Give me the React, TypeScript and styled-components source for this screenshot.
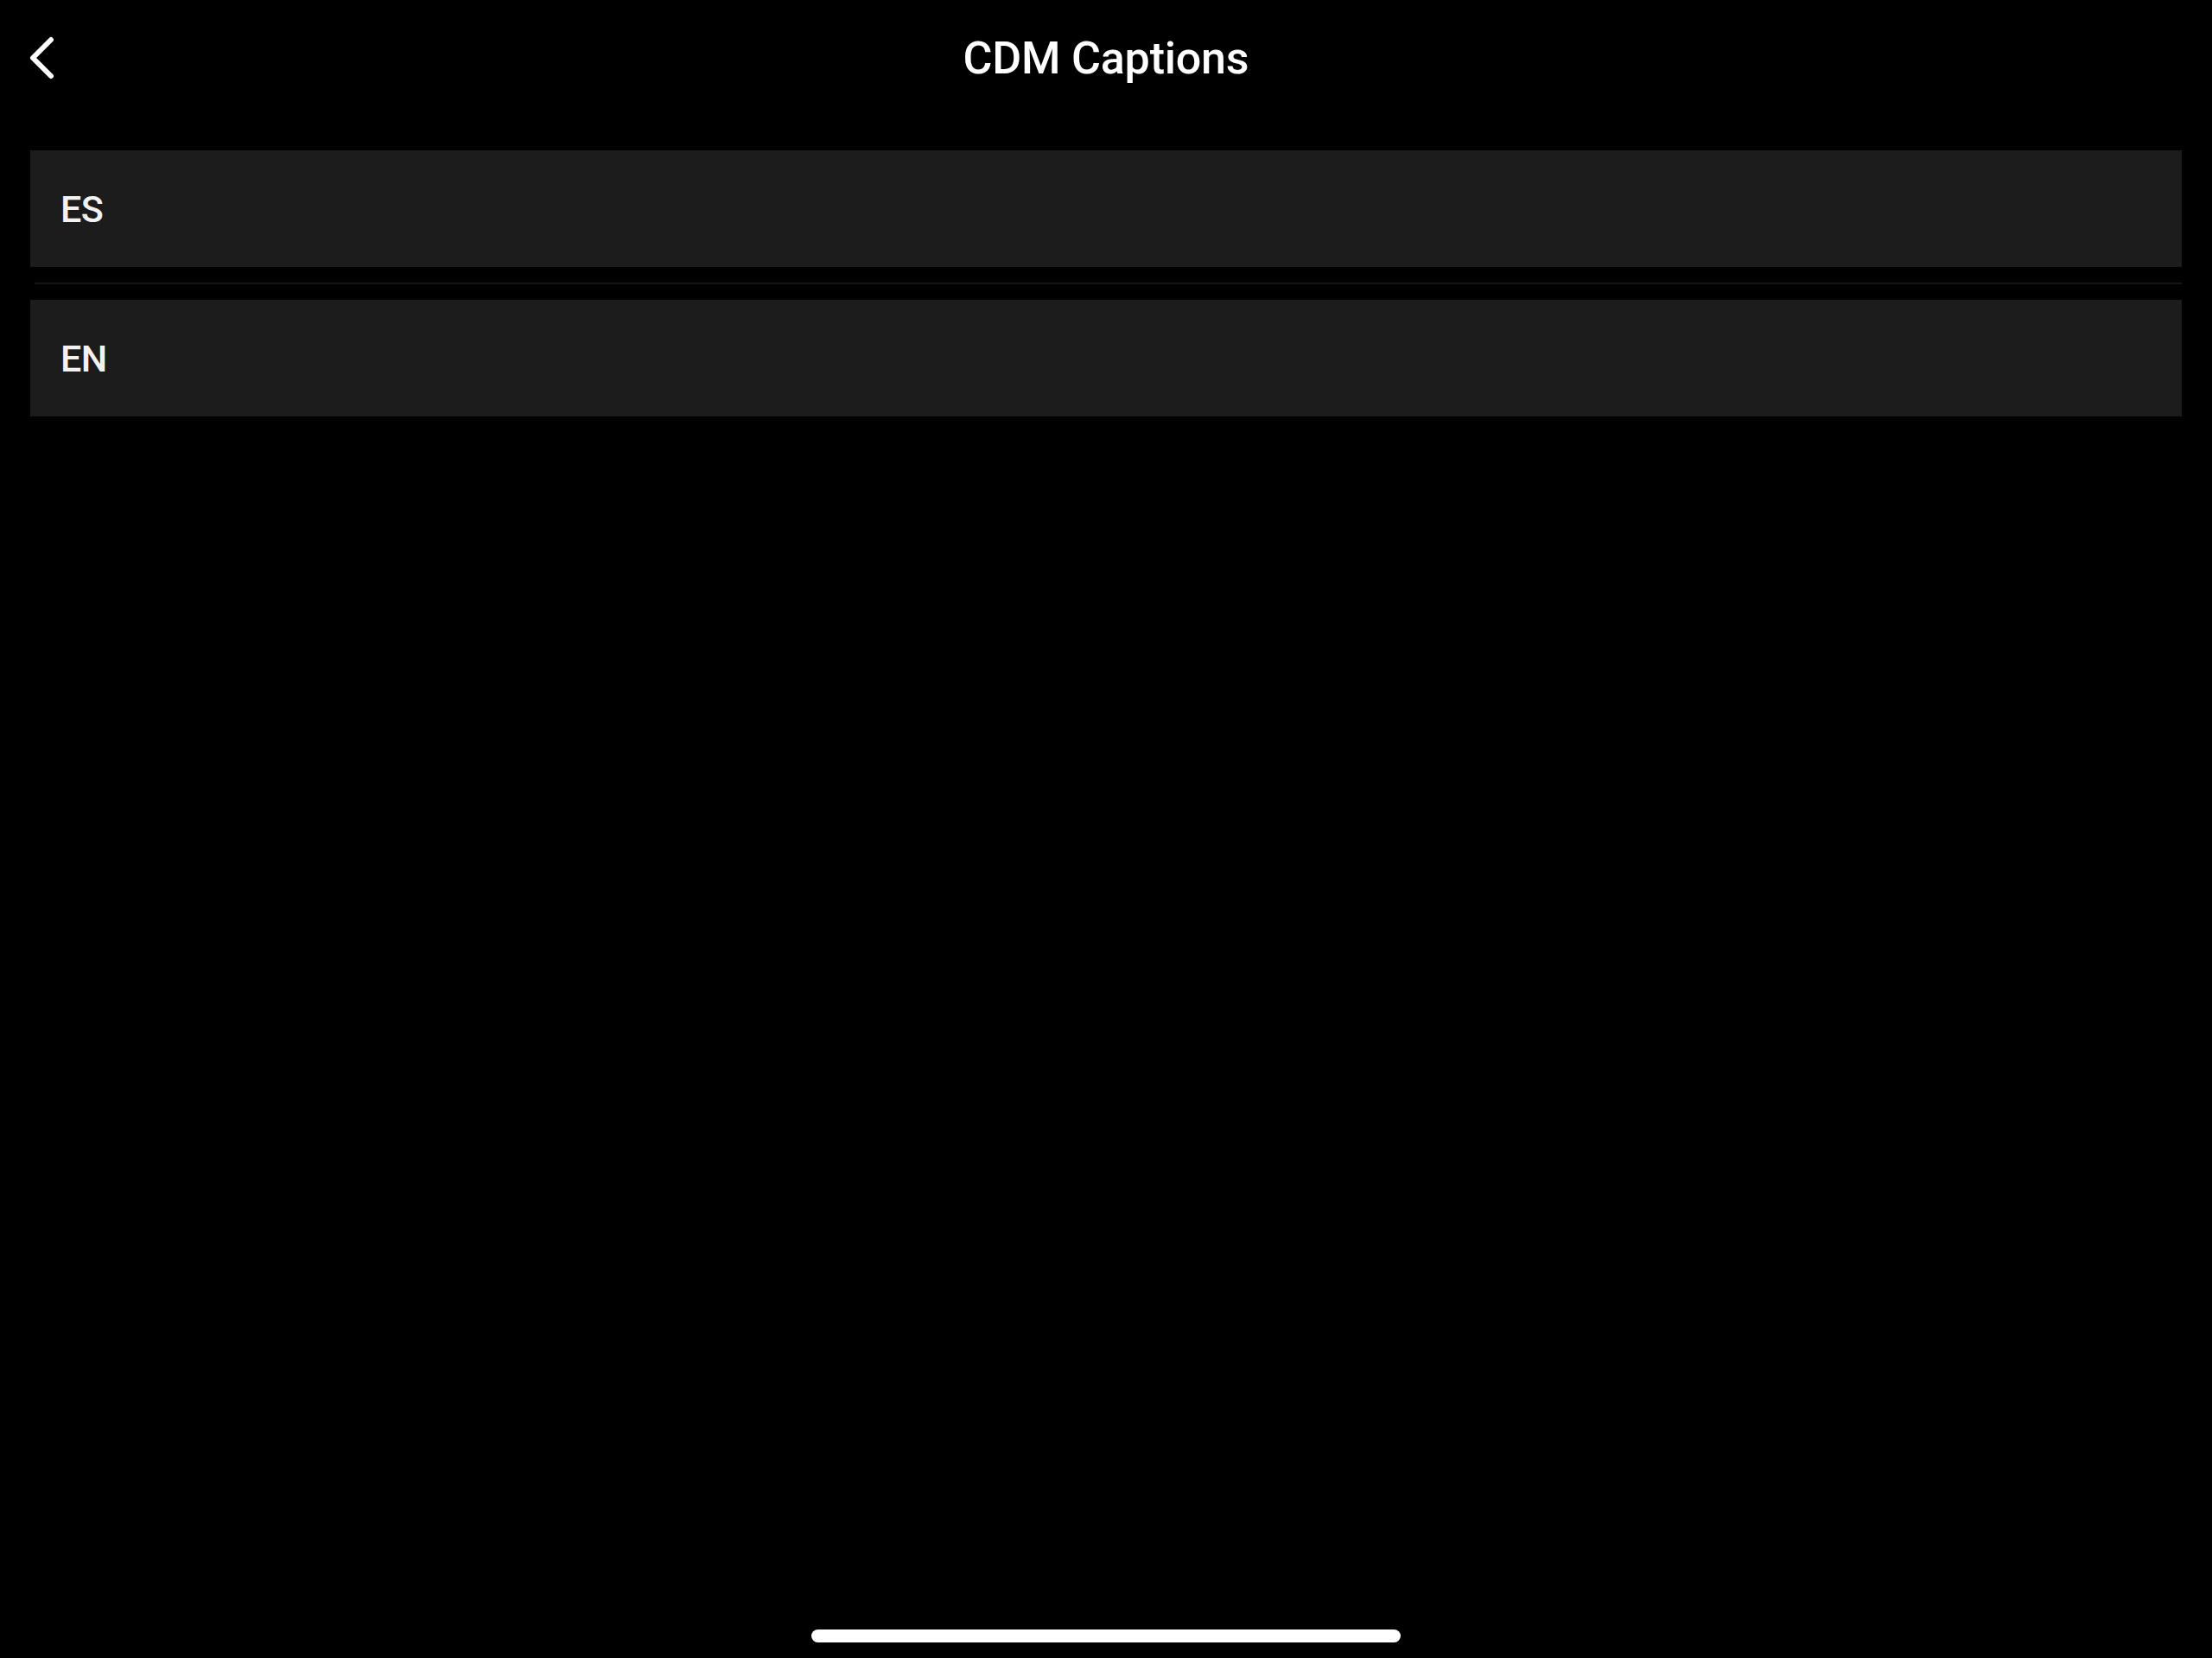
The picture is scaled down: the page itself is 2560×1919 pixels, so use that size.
import React from 'react'
import styled, {createGlobalStyle} from 'styled-components'

const GlobalStyle = createGlobalStyle`
  html, body {
    margin: 0;
    padding: 0;
    background: #000000;
  }
  body {
    font-family: Roboto, "Liberation Sans", sans-serif;
    -webkit-font-smoothing: antialiased;
  }
`

const Screen = styled.div`
  width: 2560px;
  height: 1919px;
  background: #000000;
  display: flex;
  flex-direction: column;
  box-sizing: border-box;
  overflow: hidden;
`

const Header = styled.div`
  height: 134px;
  display: grid;
  grid-template-columns: 200px 1fr 200px;
  align-items: center;
`

const BackButton = styled.button`
  width: 70px;
  height: 52px;
  padding: 0 0 0 33px;
  border: none;
  background: transparent;
  display: flex;
  align-items: center;
  justify-content: flex-start;
  cursor: pointer;
`

const Title = styled.h1`
  margin: 0;
  text-align: center;
  color: #ffffff;
  font-size: 52px;
  font-weight: 500;
  letter-spacing: -0.2px;
`

const List = styled.div`
  display: flex;
  flex-direction: column;
  padding: 40px 35px 0 35px;
`

const Row = styled.div`
  height: 135px;
  background: #1c1c1d;
  display: flex;
  align-items: center;
  box-sizing: border-box;
  padding-left: 35px;
  cursor: pointer;

  span {
    color: #f2f2f2;
    font-size: 43px;
    font-weight: 500;
    letter-spacing: -0.5px;
  }
`

const Separator = styled.div`
  height: 38px;
  display: flex;
  align-items: center;
  padding-left: 5px;

  &::after {
    content: '';
    flex: 1;
    height: 2px;
    background: #161617;
  }
`

const Spacer = styled.div`
  flex: 1;
`

const HomeIndicator = styled.div`
  align-self: center;
  width: 682px;
  height: 15px;
  border-radius: 8px;
  background: #ffffff;
  margin-bottom: 18px;
`

const languages = ['ES', 'EN']

const App: React.FC = () => {
    return (
        <Screen>
            <GlobalStyle/>
            <Header>
                <BackButton aria-label="Back">
                    <svg width="30" height="50" viewBox="0 0 30 50" fill="none">
                        <path d="M26 4 L5 25 L26 46" stroke="#ffffff" strokeWidth="6"
                              strokeLinecap="round" strokeLinejoin="round"/>
                    </svg>
                </BackButton>
                <Title>CDM Captions</Title>
                <div/>
            </Header>
            <List>
                {languages.map((lang, i) => (
                    <React.Fragment key={lang}>
                        {i > 0 && <Separator/>}
                        <Row>
                            <span>{lang}</span>
                        </Row>
                    </React.Fragment>
                ))}
            </List>
            <Spacer/>
            <HomeIndicator/>
        </Screen>
    )
}

export default App
